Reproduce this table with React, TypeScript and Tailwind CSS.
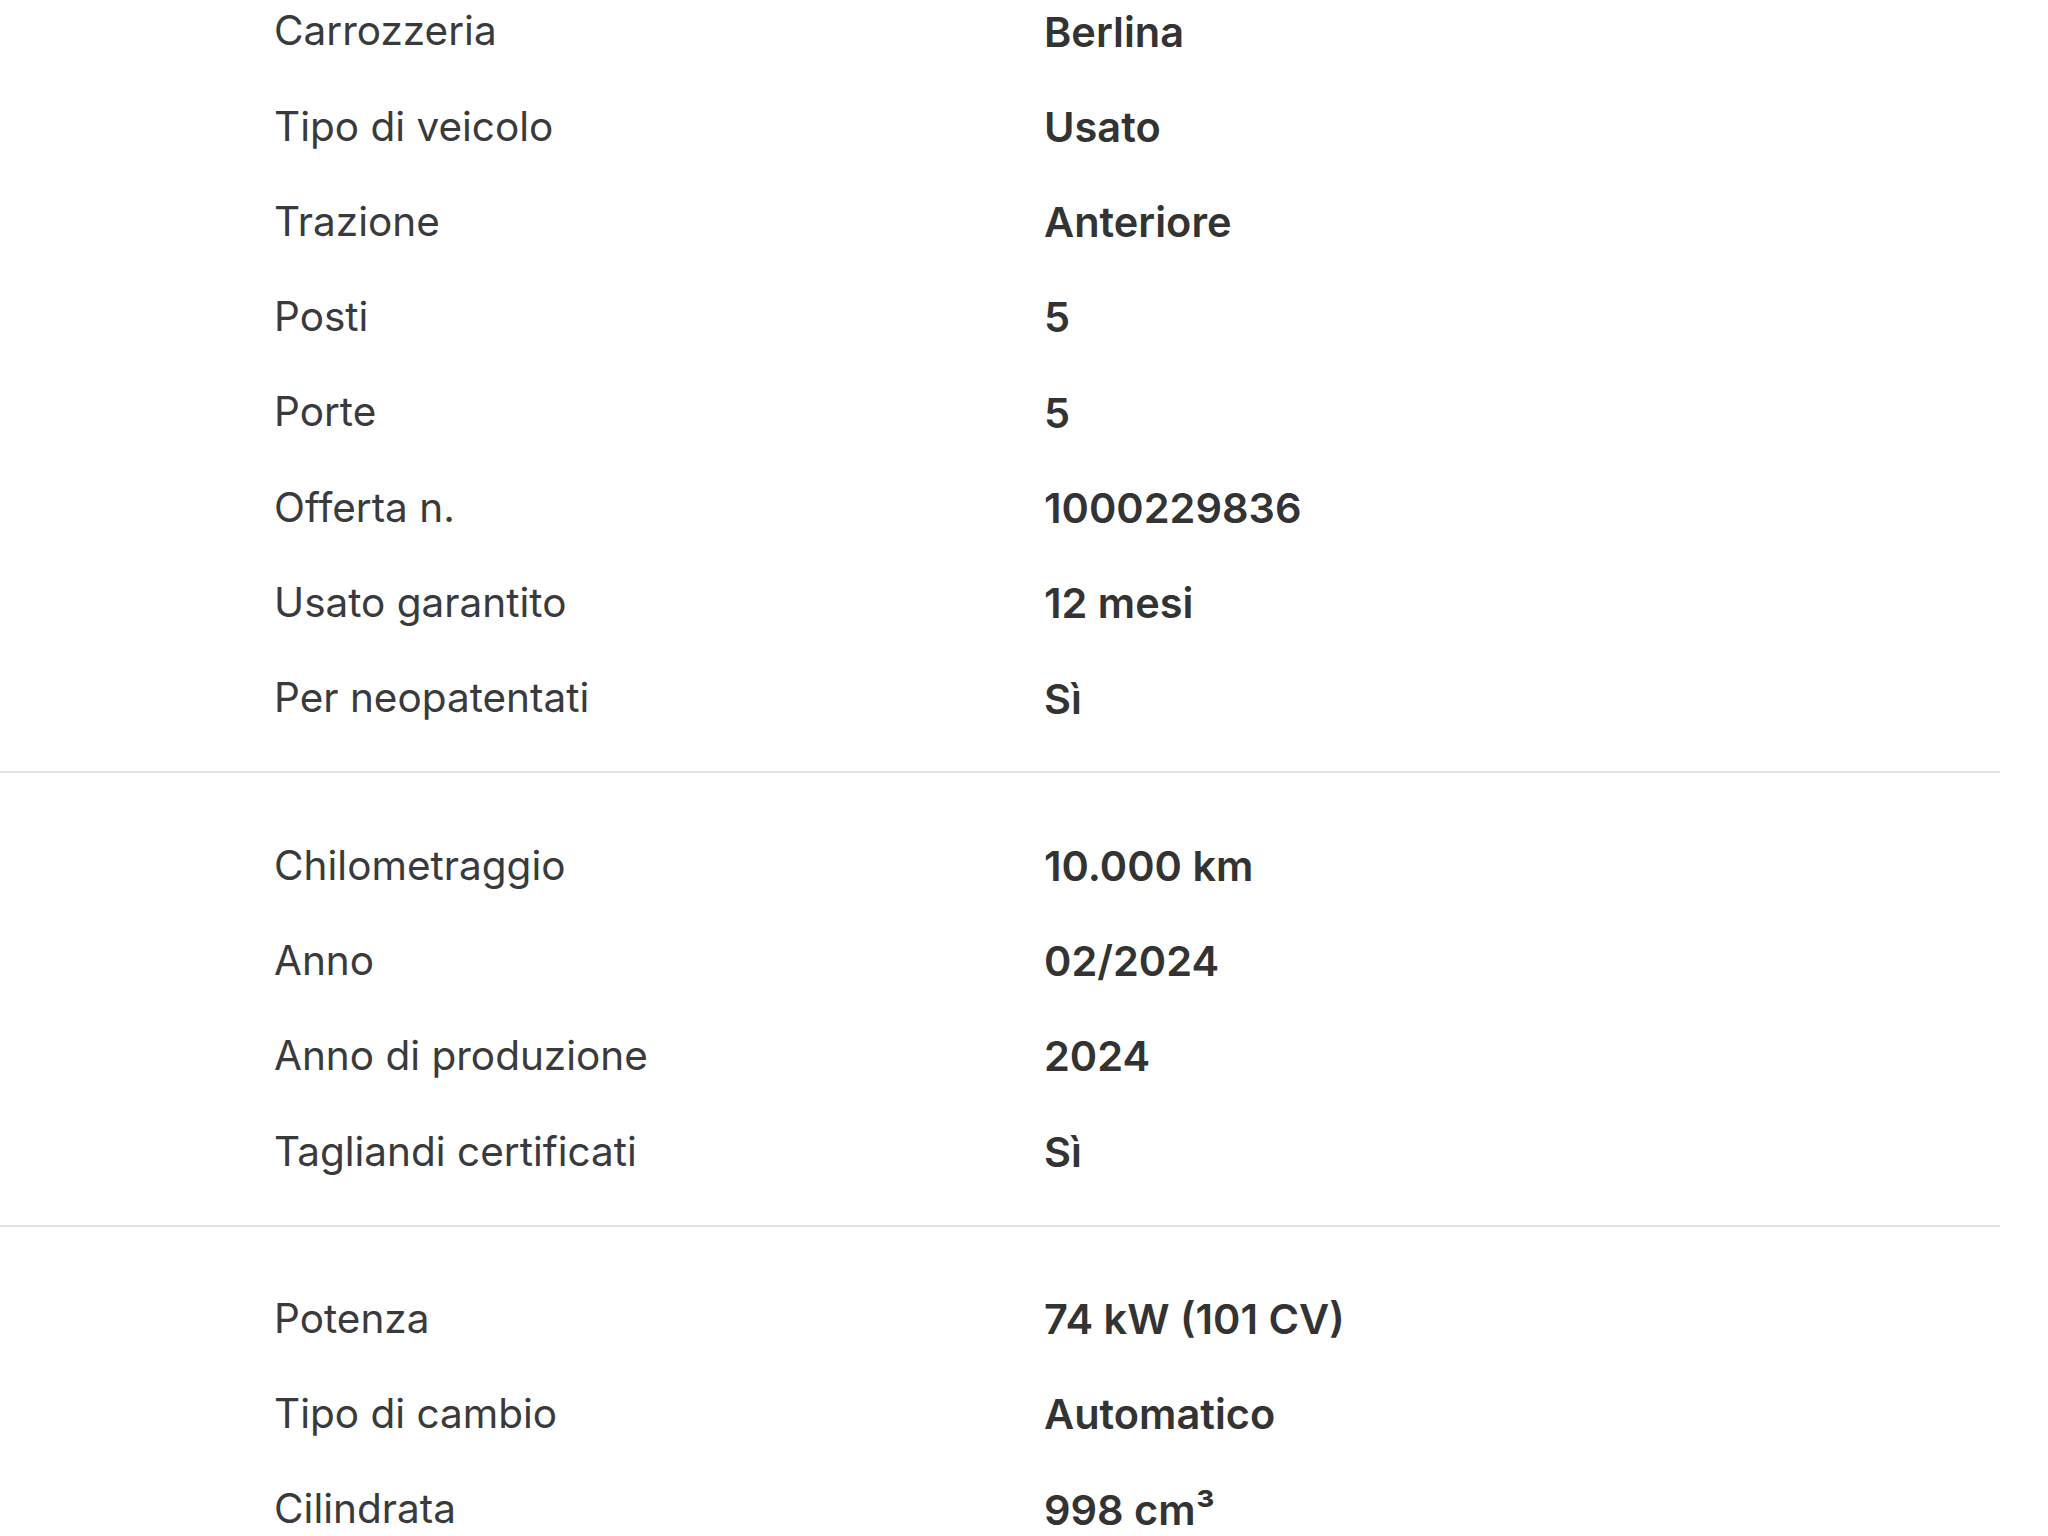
import React from 'react';

type Row = [string, string];

const groups: Row[][] = [
  [
    ['Carrozzeria', 'Berlina'],
    ['Tipo di veicolo', 'Usato'],
    ['Trazione', 'Anteriore'],
    ['Posti', '5'],
    ['Porte', '5'],
    ['Offerta n.', '1000229836'],
    ['Usato garantito', '12 mesi'],
    ['Per neopatentati', 'Sì'],
  ],
  [
    ['Chilometraggio', '10.000 km'],
    ['Anno', '02/2024'],
    ['Anno di produzione', '2024'],
    ['Tagliandi certificati', 'Sì'],
  ],
  [
    ['Potenza', '74 kW (101 CV)'],
    ['Tipo di cambio', 'Automatico'],
    ['Cilindrata', '998 cm³'],
  ],
];

const SpecRow: React.FC<{ label: string; value: string }> = ({ label, value }) => (
  <div className="flex items-center h-[95.3px] pl-[274px]">
    <span className="w-[770px] shrink-0 text-[40.5px] text-[#3a3a3c]">{label}</span>
    <span className="text-[41.5px] font-semibold text-[#333333]">{value}</span>
  </div>
);

export default function App() {
  return (
    <div className="w-[2048px] h-[1536px] overflow-hidden bg-white" style={{ fontFamily: 'Inter, "Noto Sans", sans-serif' }}>
      <div className="-mt-[16px]">
        {groups.map((rows, gi) => (
          <div key={gi}>
            <div className={gi === 0 ? 'pb-[25px]' : 'pt-[45px] pb-[25px]'}>
              {rows.map(([l, v]) => (
                <SpecRow key={l} label={l} value={v} />
              ))}
            </div>
            {gi < groups.length - 1 && <div className="w-[2000px] h-[2px] bg-[#e1e1e1]" />}
          </div>
        ))}
      </div>
    </div>
  );
}
